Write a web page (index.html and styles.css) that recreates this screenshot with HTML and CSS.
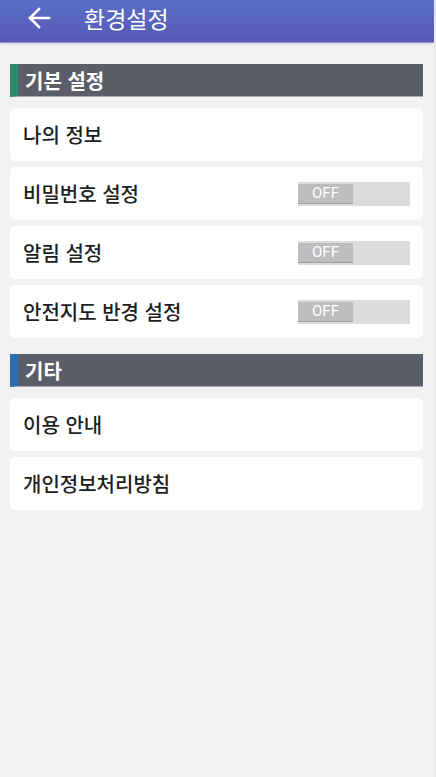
FILE: index.html
```html
<!DOCTYPE html>
<html lang="ko">
<head>
  <meta charset="UTF-8">
  <meta name="viewport" content="width=device-width, initial-scale=1.0">
  <title>환경설정</title>
  <link rel="stylesheet" href="styles.css">
</head>
<body>

<div class="topbar">
  <a href="#" class="back">
    <svg width="24" height="22" viewBox="0 0 24 22">
      <path d="M22 11H3M12 2L3 11l9 9" fill="none" stroke="#fff" stroke-width="2.6" stroke-linecap="square"/>
    </svg>
  </a>
  <h1>환경설정</h1>
</div>

<div class="content">
  <div class="section-title green">기본 설정</div>
  <div class="item">나의 정보</div>
  <div class="item">
    <span>비밀번호 설정</span>
    <div class="toggle"><span class="knob">OFF</span></div>
  </div>
  <div class="item">
    <span>알림 설정</span>
    <div class="toggle"><span class="knob">OFF</span></div>
  </div>
  <div class="item">
    <span>안전지도 반경 설정</span>
    <div class="toggle"><span class="knob">OFF</span></div>
  </div>

  <div class="section-title blue">기타</div>
  <div class="item">이용 안내</div>
  <div class="item">개인정보처리방침</div>
</div>

</body>
</html>
```

FILE: styles.css
```css
* {
  margin: 0;
  padding: 0;
  box-sizing: border-box;
  font-family: "Noto Sans CJK KR", "Noto Sans", sans-serif;
}

body {
  background-color: #f2f2f2;
  height: 100vh;
  border-right: 2px solid #e8e8e8;
}

.topbar {
  height: 43px;
  background: linear-gradient(#5b6fc8, #5659b4);
  border-bottom: 1px solid #8d93d3;
  display: flex;
  align-items: center;
  padding-left: 27px;
  box-shadow: 0 1px 3px rgba(0, 0, 0, 0.15);
}

.back {
  display: flex;
  margin-top: -6px;
}

.topbar h1 {
  color: #fff;
  font-size: 23px;
  font-weight: 400;
  margin-left: 33px;
  margin-top: -6px;
}

.content {
  padding: 21px 11px 0 10px;
}

.section-title {
  height: 33px;
  background-color: #5b5d69;
  color: #fff;
  font-size: 20px;
  font-weight: 700;
  display: flex;
  align-items: center;
  padding-left: 7px;
  border-left: 8px solid #2e8b6b;
  border-bottom: 1px solid #a9abb8;
  margin-bottom: 11px;
}

.section-title.blue {
  border-left-color: #2b6fae;
  margin-top: 16px;
}

.item {
  height: 53px;
  background-color: #fff;
  border-radius: 5px;
  margin-bottom: 6px;
  display: flex;
  align-items: center;
  justify-content: space-between;
  padding: 0 13px;
  font-size: 20px;
  font-weight: 500;
  color: #1e1e1e;
}

.toggle {
  width: 112px;
  height: 24px;
  background-color: #dcdcdc;
  padding: 2px 0;
}

.knob {
  display: flex;
  align-items: center;
  justify-content: center;
  width: 55px;
  height: 20px;
  background-color: #bdbdbd;
  border-bottom: 1px solid #9e9e9e;
  color: #fff;
  font-size: 15px;
  font-weight: 400;
  font-family: Roboto, sans-serif;
}
```
